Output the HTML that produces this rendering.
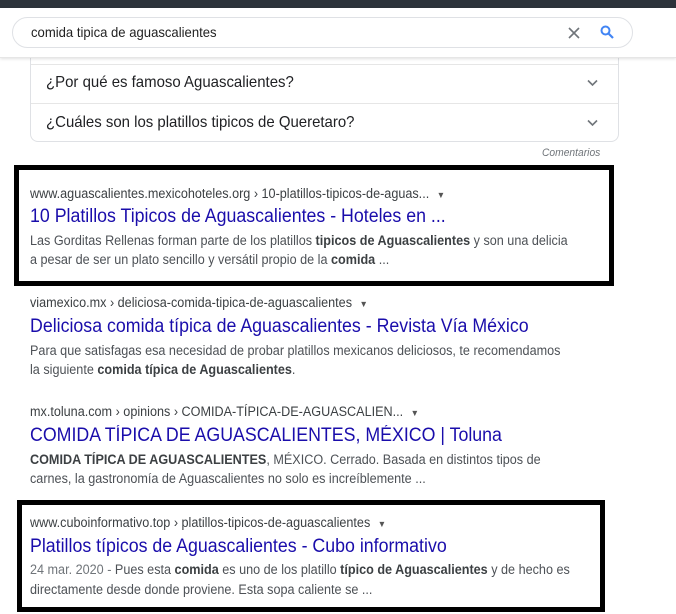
<!DOCTYPE html>
<html><head><meta charset="utf-8">
<style>
body{margin:0;width:676px;height:614px;background:#fff;position:relative;overflow:hidden;font-family:"Liberation Sans",Arial,sans-serif;}
.a{position:absolute;white-space:nowrap;transform-origin:left top;transform:scaleX(.935);}
.u{font-size:13.5px;color:#3c4043;}
.t{font-size:19px;color:#1a0dab;}
.s{font-size:13.5px;color:#4d5156;}
.s b{color:#3c4043;}
.tri{font-size:9px;color:#555;margin-left:8px;}
.box{position:absolute;border:5px solid #000;box-sizing:border-box;}
</style></head><body>
<div style="position:absolute;left:0;top:0;width:676px;height:8px;background:#2d333b"></div>
<div style="position:absolute;left:0;top:8px;width:676px;height:49px;background:#fff;box-shadow:0 1px 3px rgba(0,0,0,.12);border-bottom:1px solid #e6e6e6;z-index:2"></div>
<div style="position:absolute;left:12px;top:17px;width:621px;height:31px;border:1px solid #dfe1e5;border-radius:16px;box-sizing:border-box;z-index:3"></div>
<div class="a" style="left:31px;top:24px;font-size:14px;color:#222;z-index:4">comida tipica de aguascalientes</div>
<svg style="position:absolute;left:568px;top:27px;z-index:4" width="12" height="12" viewBox="0 0 12 12"><path d="M1 1L11 11M11 1L1 11" stroke="#70757a" stroke-width="1.6"/></svg>
<svg style="position:absolute;left:600px;top:25px;z-index:4" width="14" height="14" viewBox="0 0 14 14"><circle cx="5.5" cy="5.5" r="4" fill="none" stroke="#4285f4" stroke-width="2"/><path d="M8.5 8.5L13 13" stroke="#4285f4" stroke-width="2.2"/></svg>

<div style="position:absolute;left:30px;top:40px;width:589px;height:102px;border:1px solid #dfe1e5;border-top:none;border-radius:0 0 8px 8px;box-sizing:border-box"></div>
<div style="position:absolute;left:31px;top:64px;width:587px;height:1px;background:#e6e6e6"></div>
<div style="position:absolute;left:31px;top:103px;width:587px;height:1px;background:#e6e6e6"></div>
<div class="a" style="left:46px;top:74px;font-size:16px;color:#202124">¿Por qué es famoso Aguascalientes?</div>
<div class="a" style="left:46px;top:114px;font-size:16px;color:#202124">¿Cuáles son los platillos tipicos de Queretaro?</div>
<svg style="position:absolute;left:587px;top:79px" width="11" height="8" viewBox="0 0 11 8"><path d="M1 1.5L5.5 6L10 1.5" fill="none" stroke="#70757a" stroke-width="1.6"/></svg>
<svg style="position:absolute;left:587px;top:119px" width="11" height="8" viewBox="0 0 11 8"><path d="M1 1.5L5.5 6L10 1.5" fill="none" stroke="#70757a" stroke-width="1.6"/></svg>
<div class="a" style="left:542px;top:147px;font-size:11px;color:#70757a;font-style:italic">Comentarios</div>

<div class="box" style="left:14px;top:165px;width:600px;height:121px"></div>
<div class="a u" style="left:30px;top:186px">www.aguascalientes.mexicohoteles.org › 10-platillos-tipicos-de-aguas...<span class="tri">▼</span></div>
<div class="a t" style="left:30px;top:206px">10 Platillos Tipicos de Aguascalientes - Hoteles en ...</div>
<div class="a s" style="left:30px;top:233px">Las Gorditas Rellenas forman parte de los platillos <b>tipicos de Aguascalientes</b> y son una delicia</div>
<div class="a s" style="left:30px;top:252px">a pesar de ser un plato sencillo y versátil propio de la <b>comida</b> ...</div>

<div class="a u" style="left:30px;top:295px">viamexico.mx › deliciosa-comida-tipica-de-aguascalientes<span class="tri">▼</span></div>
<div class="a t" style="left:30px;top:316px">Deliciosa comida típica de Aguascalientes - Revista Vía México</div>
<div class="a s" style="left:30px;top:343px">Para que satisfagas esa necesidad de probar platillos mexicanos deliciosos, te recomendamos</div>
<div class="a s" style="left:30px;top:362px">la siguiente <b>comida típica de Aguascalientes</b>.</div>

<div class="a u" style="left:30px;top:404px">mx.toluna.com › opinions › COMIDA-TÍPICA-DE-AGUASCALIEN...<span class="tri">▼</span></div>
<div class="a t" style="left:30px;top:425px">COMIDA TÍPICA DE AGUASCALIENTES, MÉXICO | Toluna</div>
<div class="a s" style="left:30px;top:452px"><b>COMIDA TÍPICA DE AGUASCALIENTES</b>, MÉXICO. Cerrado. Basada en distintos tipos de</div>
<div class="a s" style="left:30px;top:471px">carnes, la gastronomía de Aguascalientes no solo es increíblemente ...</div>

<div class="box" style="left:17px;top:500px;width:588px;height:112px"></div>
<div class="a u" style="left:30px;top:515px">www.cuboinformativo.top › platillos-tipicos-de-aguascalientes<span class="tri">▼</span></div>
<div class="a t" style="left:30px;top:536px">Platillos típicos de Aguascalientes - Cubo informativo</div>
<div class="a s" style="left:30px;top:562px"><span style="color:#70757a">24 mar. 2020 - </span>Pues esta <b>comida</b> es uno de los platillo <b>típico de Aguascalientes</b> y de hecho es</div>
<div class="a s" style="left:30px;top:582px">directamente desde donde proviene. Esta sopa caliente se ...</div>
</body></html>
